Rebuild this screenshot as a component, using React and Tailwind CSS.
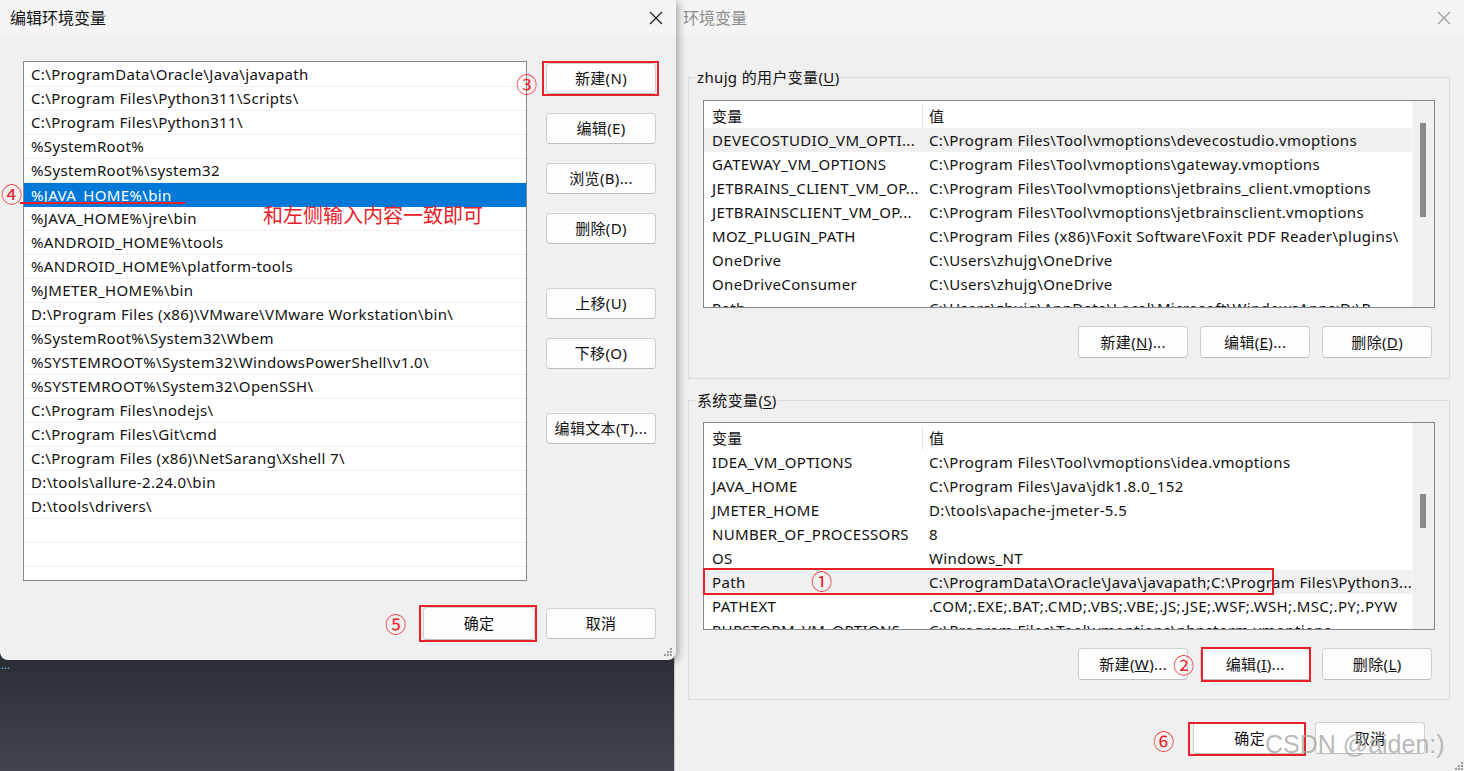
import React from 'react';

const pathList = [
  "C:\\ProgramData\\Oracle\\Java\\javapath",
  "C:\\Program Files\\Python311\\Scripts\\",
  "C:\\Program Files\\Python311\\",
  "%SystemRoot%",
  "%SystemRoot%\\system32",
  "%JAVA_HOME%\\bin",
  "%JAVA_HOME%\\jre\\bin",
  "%ANDROID_HOME%\\tools",
  "%ANDROID_HOME%\\platform-tools",
  "%JMETER_HOME%\\bin",
  "D:\\Program Files (x86)\\VMware\\VMware Workstation\\bin\\",
  "%SystemRoot%\\System32\\Wbem",
  "%SYSTEMROOT%\\System32\\WindowsPowerShell\\v1.0\\",
  "%SYSTEMROOT%\\System32\\OpenSSH\\",
  "C:\\Program Files\\nodejs\\",
  "C:\\Program Files\\Git\\cmd",
  "C:\\Program Files (x86)\\NetSarang\\Xshell 7\\",
  "D:\\tools\\allure-2.24.0\\bin",
  "D:\\tools\\drivers\\",
  "",
  "",
  "",
];

const userVars = [
  ["DEVECOSTUDIO_VM_OPTI...", "C:\\Program Files\\Tool\\vmoptions\\devecostudio.vmoptions", true],
  ["GATEWAY_VM_OPTIONS", "C:\\Program Files\\Tool\\vmoptions\\gateway.vmoptions"],
  ["JETBRAINS_CLIENT_VM_OP...", "C:\\Program Files\\Tool\\vmoptions\\jetbrains_client.vmoptions"],
  ["JETBRAINSCLIENT_VM_OP...", "C:\\Program Files\\Tool\\vmoptions\\jetbrainsclient.vmoptions"],
  ["MOZ_PLUGIN_PATH", "C:\\Program Files (x86)\\Foxit Software\\Foxit PDF Reader\\plugins\\"],
  ["OneDrive", "C:\\Users\\zhujg\\OneDrive"],
  ["OneDriveConsumer", "C:\\Users\\zhujg\\OneDrive"],
  ["Path", "C:\\Users\\zhujg\\AppData\\Local\\Microsoft\\WindowsApps;D:\\P..."],
];

const sysVars = [
  ["IDEA_VM_OPTIONS", "C:\\Program Files\\Tool\\vmoptions\\idea.vmoptions"],
  ["JAVA_HOME", "C:\\Program Files\\Java\\jdk1.8.0_152"],
  ["JMETER_HOME", "D:\\tools\\apache-jmeter-5.5"],
  ["NUMBER_OF_PROCESSORS", "8"],
  ["OS", "Windows_NT"],
  ["Path", "C:\\ProgramData\\Oracle\\Java\\javapath;C:\\Program Files\\Python3...", true],
  ["PATHEXT", ".COM;.EXE;.BAT;.CMD;.VBS;.VBE;.JS;.JSE;.WSF;.WSH;.MSC;.PY;.PYW"],
  ["PHPSTORM_VM_OPTIONS", "C:\\Program Files\\Tool\\vmoptions\\phpstorm.vmoptions"],
];

const CloseIcon = ({ color }) => (
  <svg width="14" height="14" viewBox="0 0 14 14">
    <path d="M1 1L13 13M13 1L1 13" stroke={color} strokeWidth="1.2" />
  </svg>
);

const Grip = () => (
  <svg width="8" height="8" viewBox="0 0 8 8" fill="#9a9a9a">
    <rect x="6" y="0" width="2" height="2" />
    <rect x="3" y="3" width="2" height="2" />
    <rect x="6" y="3" width="2" height="2" />
    <rect x="0" y="6" width="2" height="2" />
    <rect x="3" y="6" width="2" height="2" />
    <rect x="6" y="6" width="2" height="2" />
  </svg>
);

const Btn = ({ children, className = "" }) => (
  <button className={`h-[31px] w-[110px] rounded-[4px] border border-[#d0d0d0] border-b-[#bdbdbd] bg-[#fdfdfd] text-[15px] text-[#111] leading-none ${className}`}>
    {children}
  </button>
);

const VarTable = ({ rows, thumbTop, thumbHeight }) => (
  <div className="h-[208px] border border-[#828790] bg-white flex overflow-hidden">
    <div className="flex-1 overflow-hidden">
      <div className="h-[27px] flex items-center pt-[3px]">
        <div className="w-[218px] pl-[8px]">变量</div>
        <div className="self-stretch w-px bg-[#e5e5e5]" />
        <div className="pl-[6px]">值</div>
      </div>
      {rows.map(([k, v, hl], i) => (
        <div key={i} className={`h-[24px] flex items-center whitespace-nowrap ${hl ? "bg-[#f0f0f0]" : ""}`}>
          <div className="w-[219px] pl-[8px] overflow-hidden">{k}</div>
          <div className="pl-[6px] overflow-hidden">{v}</div>
        </div>
      ))}
    </div>
    <div className="w-[22px] bg-[#f0f0f0] border-l border-[#f6f6f6]">
      <div className="ml-[7px] w-[6px] bg-[#8a8a8a]" style={{ marginTop: thumbTop, height: thumbHeight }} />
    </div>
  </div>
);

const Mark = ({ x, y, children }) => (
  <div
    className="absolute w-[24px] h-[26px] flex items-center justify-center text-[21px] leading-none text-[#e8202a]"
    style={{ left: x - 12, top: y - 13 }}
  >
    {children}
  </div>
);

const RedBox = ({ l, t, w, h }) => (
  <div className="absolute border-[2.5px] border-[#e8202a]" style={{ left: l, top: t, width: w, height: h }} />
);

export default function App() {
  return (
    <div className="relative w-[1464px] h-[771px] overflow-hidden flex bg-[#33363e] text-[15px] tracking-[0.35px] text-[#111] font-['Noto_Sans','Noto_Sans_CJK_SC',sans-serif]">
      {/* left column: edit dialog + desktop below */}
      <div className="w-[674px] flex flex-col relative z-10">
        <div className="h-[660px] w-[676px] bg-[#f0f0f0] rounded-b-[8px] shadow-[2px_2px_8px_rgba(0,0,0,0.35)] relative">
          <div className="h-[36px] bg-[#f4f4f4] flex items-center justify-between pl-[10px] pr-[13px]">
            <span className="text-[16px] tracking-normal">编辑环境变量</span>
            <CloseIcon color="#1a1a1a" />
          </div>
          <div className="flex pl-[23px] pt-[25px]">
            <div className="w-[504px] h-[520px] border border-[#828790] bg-white overflow-hidden pt-[1px]">
              {pathList.map((p, i) => (
                <div
                  key={i}
                  className={`h-[24px] pl-[7px] flex items-center whitespace-nowrap ${
                    i === 5 ? "bg-[#0078d7] text-white" : "border-b border-[#f0f0f0]"
                  }`}
                >
                  {p}
                </div>
              ))}
            </div>
            <div className="ml-[19px] w-[110px] flex flex-col pt-[2px]">
              <Btn>新建(N)</Btn>
              <Btn className="mt-[19px]">编辑(E)</Btn>
              <Btn className="mt-[19px]">浏览(B)...</Btn>
              <Btn className="mt-[19px]">删除(D)</Btn>
              <Btn className="mt-[44px]">上移(U)</Btn>
              <Btn className="mt-[19px]">下移(O)</Btn>
              <Btn className="mt-[44px]">编辑文本(T)...</Btn>
            </div>
          </div>
          <div className="flex justify-end items-center gap-[11px] pr-[20px] mt-[26px]">
            <Btn className="w-[112px] h-[33px] border-[#1e5fa8]">确定</Btn>
            <Btn>取消</Btn>
          </div>
          <div className="absolute right-[4px] bottom-[4px]">
            <Grip />
          </div>
        </div>
        <div className="flex-1 bg-gradient-to-b from-[#2b2e35] to-[#42454d] relative">
          <span className="absolute left-[1px] top-[0px] text-[10px] leading-none text-[#9fd0ea]">...</span>
        </div>
      </div>

      {/* right: environment variables dialog */}
      <div className="flex-1 h-full bg-[#f0f0f0] border-l border-[#c8c8c8] relative">
        <div className="h-[36px] bg-[#f4f4f4] flex items-center justify-between pl-[8px] pr-[14px]">
          <span className="text-[16px] tracking-normal text-[#8c8c8c]">环境变量</span>
          <CloseIcon color="#9a9a9a" />
        </div>
        <div className="pl-[13px] pr-[15px] pt-[31px]">
          <fieldset className="border border-[#dcdcdc] px-[14px] pt-[13px] pb-[20px]">
            <legend className="-ml-[7px] px-[1px] leading-[20px]">
              zhujg 的用户变量(<u className="underline-offset-2">U</u>)
            </legend>
            <VarTable rows={userVars} thumbTop={22} thumbHeight={94} />
            <div className="flex justify-end gap-[12px] pr-[3px] mt-[18px]">
              <Btn className="h-[32px]">新建(<u>N</u>)...</Btn>
              <Btn className="h-[32px]">编辑(<u>E</u>)...</Btn>
              <Btn className="h-[32px]">删除(<u>D</u>)</Btn>
            </div>
          </fieldset>
          <fieldset className="mt-[11px] border border-[#dcdcdc] px-[14px] pt-[12px] pb-[19px]">
            <legend className="-ml-[7px] px-[1px] leading-[20px]">
              系统变量(<u className="underline-offset-2">S</u>)
            </legend>
            <VarTable rows={sysVars} thumbTop={71} thumbHeight={34} />
            <div className="flex justify-end gap-[12px] pr-[3px] mt-[18px]">
              <Btn className="h-[32px]">新建(<u>W</u>)...</Btn>
              <Btn className="h-[32px]">编辑(<u>I</u>)...</Btn>
              <Btn className="h-[32px]">删除(<u>L</u>)</Btn>
            </div>
          </fieldset>
          <div className="flex justify-end items-center gap-[9px] pr-[25px] mt-[22px]">
            <Btn className="w-[113px] h-[32px] bg-white">确定</Btn>
            <Btn className="h-[32px]">取消</Btn>
          </div>
        </div>
        <div className="absolute right-[2px] bottom-[1px]">
          <Grip />
        </div>
      </div>

      {/* annotations */}
      <div className="absolute left-[20px] top-[202px] w-[165px] h-[2px] bg-[#e8202a] z-20" />
      <div className="absolute left-[263px] top-[203px] text-[20px] leading-[26px] tracking-normal text-[#e8202a] z-20">
        和左侧输入内容一致即可
      </div>
      <div className="absolute inset-0 z-20 pointer-events-none">
        <RedBox l={542} t={61} w={117} h={35} />
        <RedBox l={419} t={605} w={118} h={37} />
        <RedBox l={703} t={568} w={571} h={27} />
        <RedBox l={1201} t={647} w={110} h={35} />
        <RedBox l={1188} t={722} w={118} h={34} />
        <Mark x={527} y={84}>③</Mark>
        <Mark x={12} y={194}>④</Mark>
        <Mark x={396} y={624}>⑤</Mark>
        <Mark x={822} y={581}>①</Mark>
        <Mark x={1184} y={665}>②</Mark>
        <Mark x={1164} y={741}>⑥</Mark>
        <div className="absolute left-[1265px] top-[728px] text-[25px] leading-[32px] tracking-normal text-[#a8a8a8]/80 font-['Liberation_Sans',sans-serif]">
          CSDN @aiden:)
        </div>
      </div>
    </div>
  );
}
